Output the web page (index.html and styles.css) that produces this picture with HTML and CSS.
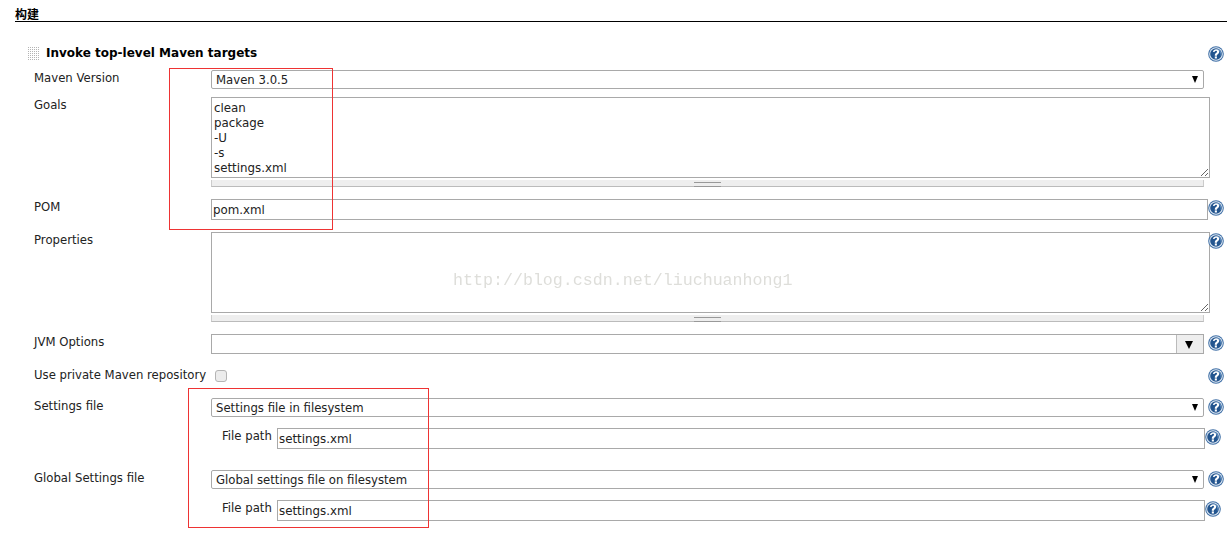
FILE: index.html
```html
<!DOCTYPE html>
<html lang="zh">
<head>
<meta charset="utf-8">
<title>构建</title>
<link rel="stylesheet" href="styles.css">
</head>
<body>
<svg class="defs" width="0" height="0" aria-hidden="true">
  <symbol id="help" viewBox="0 0 16 16">
    <circle cx="8" cy="8" r="7.8" fill="#3f6fa6"/>
    <circle cx="8" cy="8" r="6.8" fill="#e4ecf5"/>
    <circle cx="8" cy="8" r="5.8" fill="#23558f"/>
    <path d="M8 2.6a5.4 5.4 0 0 1 4.6 8.2A8 8 0 0 0 8 2.6z" fill="#5f8fc2"/>
    <path d="M4.9 5.9C5.2 4 6.6 3.2 8.1 3.2c1.9 0 3.1 1.1 3.1 2.6 0 1.2-.7 1.8-1.5 2.4-.6.4-.8.8-.8 1.5H6.8c0-1.4.4-2 1.2-2.6.6-.5 1-.8 1-1.4 0-.6-.4-1-1-1-.7 0-1.1.4-1.2 1.1z" fill="#fff"/>
    <rect x="6.8" y="10.4" width="2.1" height="2.1" fill="#fff"/>
  </symbol>
</svg>
<section class="page">
  <h2 class="section-title">构建</h2>
  <div class="builder">
    <div class="step-head">
      <span class="grip"></span>
      <strong class="step-title">Invoke top-level Maven targets</strong>
      <svg class="help help-top"><use href="#help"/></svg>
    </div>

    <div class="row row-version">
      <label class="label">Maven Version</label>
      <div class="select-wrap"><select class="select"><option>Maven 3.0.5</option></select></div>
    </div>

    <div class="row row-goals">
      <label class="label">Goals</label>
      <div class="area-wrap">
        <textarea class="area" rows="5">clean
package
-U
-s
settings.xml</textarea>
        <div class="handle"></div>
      </div>
    </div>

    <div class="row row-pom">
      <label class="label">POM</label>
      <input class="input" value="pom.xml">
      <svg class="help help-input"><use href="#help"/></svg>
    </div>

    <div class="row row-props">
      <label class="label">Properties</label>
      <div class="area-wrap">
        <textarea class="area" rows="5"></textarea>
        <div class="handle"></div>
      </div>
      <svg class="help help-area"><use href="#help"/></svg>
    </div>

    <div class="row row-jvm">
      <label class="label">JVM Options</label>
      <div class="combo"><input class="combo-input"><span class="combo-btn"></span></div>
      <svg class="help help-wide"><use href="#help"/></svg>
    </div>

    <div class="row row-private">
      <label class="label label-check">Use private Maven repository</label>
      <input type="checkbox" class="check">
      <svg class="help help-check"><use href="#help"/></svg>
    </div>

    <div class="row row-settings">
      <label class="label">Settings file</label>
      <div class="select-wrap"><select class="select select-tall"><option>Settings file in filesystem</option></select></div>
      <svg class="help help-wide"><use href="#help"/></svg>
    </div>
    <div class="row row-path">
      <label class="sublabel">File path</label>
      <input class="input input-path" value="settings.xml">
      <svg class="help help-input"><use href="#help"/></svg>
    </div>

    <div class="row row-global">
      <label class="label">Global Settings file</label>
      <div class="select-wrap"><select class="select select-tall"><option>Global settings file on filesystem</option></select></div>
      <svg class="help help-wide"><use href="#help"/></svg>
    </div>
    <div class="row row-path">
      <label class="sublabel">File path</label>
      <input class="input input-path" value="settings.xml">
      <svg class="help help-input"><use href="#help"/></svg>
    </div>
  </div>
</section>
<div class="red-box red-one"></div>
<div class="red-box red-two"></div>
<div class="watermark">http://blog.csdn.net/liuchuanhong1</div>
</body>
</html>
```
FILE: styles.css
```css
* { box-sizing: border-box; }
html, body { margin: 0; padding: 0; }
body {
  position: relative;
  width: 1227px;
  height: 538px;
  overflow: hidden;
  background: #fff;
  color: #222;
  font-family: "DejaVu Sans", Verdana, sans-serif;
  font-size: 11.7px;
}
.defs { position: absolute; }
.page { padding: 0 0 0 15px; }
.section-title {
  margin: 0;
  height: 22px;
  padding-top: 7px;
  border-bottom: 1px solid #000;
  color: #000;
  font-family: "Noto Sans CJK SC", sans-serif;
  font-size: 12px;
  line-height: 14px;
  font-weight: 700;
}
.builder { padding-left: 19px; }
.step-head {
  display: flex;
  align-items: center;
  height: 16px;
  margin-top: 23px;
  margin-left: -7px;
}
.grip {
  width: 12px;
  height: 14px;
  margin-right: 7px;
  background-image: linear-gradient(#fff 50%, transparent 50%), linear-gradient(90deg, #fff 50%, #b4b4b4 50%);
  background-size: 2px 2px;
}
.step-title {
  flex: 0 0 1162px;
  color: #000;
  font-size: 12px;
  line-height: 16px;
}
.help { flex: none; width: 16px; height: 16px; }
.help-top { margin-top: 2px; }
.help-input { margin-top: 1px; }
.help-area { margin-top: 1px; }
.row { display: flex; align-items: flex-start; }
.label { flex: 0 0 177px; padding-top: 1px; line-height: 14px; white-space: nowrap; }
.label-check { padding-top: 0; }
.row-version { margin-top: 9px; height: 19px; }
.row-goals { margin-top: 8px; }
.row-pom { margin-top: 12px; }
.row-props { margin-top: 12px; }
.row-jvm { margin-top: 12px; }
.row-private { margin-top: 14px; }
.row-settings { margin-top: 14px; }
.row-path { margin-top: 11px; }
.row-global { margin-top: 21px; }
.select-wrap { position: relative; flex: 0 0 993px; }
.select-wrap::after {
  content: "";
  position: absolute;
  right: 6px;
  top: 6px;
  border-left: 3.5px solid transparent;
  border-right: 3.5px solid transparent;
  border-top: 7px solid #000;
}
.select {
  display: block;
  width: 100%;
  height: 19px;
  padding: 0 0 0 4px;
  border: 1px solid #a9a9a9;
  border-radius: 2px;
  background: #fff;
  color: #222;
  font: 11.7px "DejaVu Sans", Verdana, sans-serif;
  appearance: none;
}
.area-wrap { flex: 0 0 999px; }
.area {
  display: block;
  width: 100%;
  height: 81px;
  padding: 3px 2px;
  border: 1px solid #a9a9a9;
  color: #222;
  font: 11.85px/15px "DejaVu Sans", Verdana, sans-serif;
  outline: 0;
}
.handle {
  position: relative;
  width: 993px;
  height: 7px;
  margin-top: 2px;
  background: #eee;
  border-bottom: 1px solid #bbb;
  border-left: 1px solid #ccc;
  border-right: 1px solid #ccc;
}
.handle::after {
  content: "";
  position: absolute;
  left: 482px;
  top: 2px;
  width: 27px;
  height: 3px;
  border-top: 1px solid #999;
  border-bottom: 1px solid #999;
}
.row-props .area-wrap { margin-right: -2px; }
.input {
  flex: 0 0 997px;
  height: 21px;
  padding: 0 1px;
  border: 1px solid #a9a9a9;
  color: #222;
  font: 11.85px "DejaVu Sans", Verdana, sans-serif;
  outline: 0;
}
.combo {
  display: flex;
  flex: 0 0 993px;
  height: 20px;
  border: 1px solid #a9a9a9;
}
.combo-input { flex: 1; min-width: 0; border: 0; outline: 0; }
.combo-btn {
  position: relative;
  flex: 0 0 27px;
  border-left: 1px solid #bbb;
  background: #eee;
}
.combo-btn::after {
  content: "";
  position: absolute;
  left: 8px;
  top: 6px;
  border-left: 4px solid transparent;
  border-right: 4px solid transparent;
  border-top: 8px solid #000;
}
.help-wide { margin: 1px 0 0 4px; }
.check {
  flex: none;
  width: 12px;
  height: 12px;
  margin: 2px 0 0 4px;
  appearance: none;
  background: #ececec;
  border: 1px solid #b4b4b4;
  border-radius: 3px;
}
.help-check { margin-left: 981px; }
.sublabel {
  flex: 0 0 55px;
  margin-left: 188px;
  padding-top: 1px;
  line-height: 14px;
  white-space: nowrap;
}
.input-path { flex: 0 0 928px; }
.red-box { position: absolute; border: 1px solid #ee3333; }
.red-one { left: 169px; top: 68px; width: 164px; height: 162px; }
.red-two { left: 188px; top: 388px; width: 241px; height: 140px; }
.watermark {
  position: absolute;
  left: 453px;
  top: 271px;
  color: #dededa;
  font-family: "Liberation Mono", monospace;
  font-size: 16.65px;
  line-height: 20px;
  white-space: nowrap;
}
```
